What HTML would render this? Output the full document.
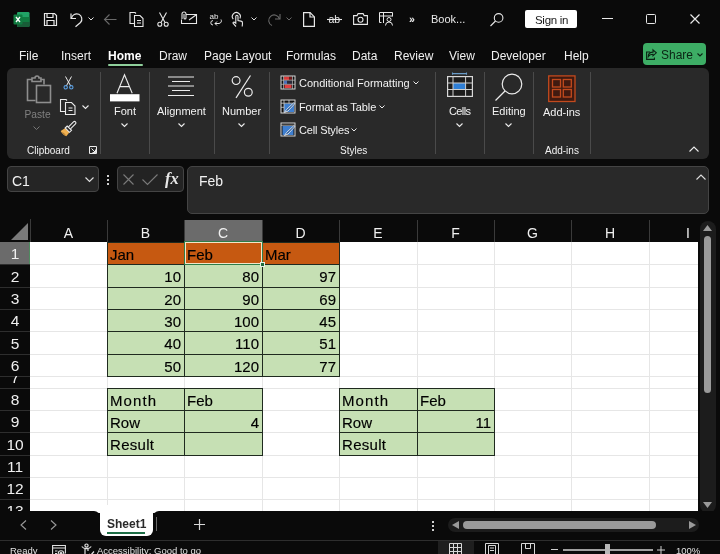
<!DOCTYPE html>
<html><head><meta charset="utf-8">
<style>
*{margin:0;padding:0;box-sizing:border-box}
html,body{width:720px;height:554px;overflow:hidden;background:#0a0a0a;font-family:"Liberation Sans",sans-serif;color:#fff}
.a{position:absolute}
.t{position:absolute;white-space:nowrap;line-height:1}
svg{position:absolute;overflow:visible}
/* title */
#ribbon{left:7px;top:68px;width:702px;height:91px;background:#292929;border-radius:6px}
.div{position:absolute;width:1px;background:#4a4a4a;top:72px;height:82px}
.tab{position:absolute;top:49px;font-size:12px;color:#f0f0f0}
.rl{font-size:11px;color:#f2f2f2}
/* grid */
#grid{left:30px;top:242px;width:668px;height:268px;background:#fff;overflow:hidden}
.gv{position:absolute;top:0;width:1px;height:268px;background:#e1e1e1}
.gh{position:absolute;left:0;height:1px;width:668px;background:#e1e1e1}
.ch{position:absolute;top:220px;height:22px;font-size:13px;color:#f0f0f0;text-align:center;line-height:22px}
.rh{position:absolute;left:0;width:30px;font-size:14px;color:#f0f0f0;text-align:center}
.cell{position:absolute;font-size:15px;color:#000;line-height:22px;padding:0 3px;-webkit-text-stroke:0.15px #000}
</style></head><body><div id="root" style="position:absolute;left:0;top:0;width:720px;height:554px;will-change:transform">

<!-- title bar -->
<div class="a" style="left:0;top:0;width:720px;height:38px;background:#0a0a0a"></div>

<!-- excel logo -->
<svg style="left:13px;top:12px" width="17" height="15" viewBox="0 0 17 15">
<rect x="4" y="0" width="12.5" height="15" rx="1.2" fill="#21a366"/>
<rect x="4" y="5" width="12.5" height="5" fill="#107c41"/>
<path d="M4 10h12.5v3.8a1.2 1.2 0 0 1-1.2 1.2h-10.1a1.2 1.2 0 0 1-1.2-1.2z" fill="#185c37"/>
<rect x="0.5" y="2.5" width="9" height="10" rx="1" fill="#107c41"/>
<path d="M3 5l4 5M7 5l-4 5" stroke="#fff" stroke-width="1.3"/>
</svg>
<!-- save -->
<svg style="left:43px;top:12px" width="15" height="15" viewBox="0 0 15 15" fill="none" stroke="#e8e8e8" stroke-width="1.2">
<path d="M1.5 1.5h10l2 2v10h-12z"/><path d="M4 1.5v4h6v-4"/><path d="M4 13.5v-5h7v5"/>
</svg>
<!-- undo -->
<svg style="left:70px;top:12px" width="14" height="15" viewBox="0 0 14 15" fill="none" stroke="#e8e8e8" stroke-width="1.2">
<path d="M1 1.5v5h5"/><path d="M1.5 6.2A5.2 5.2 0 1 1 10.5 10.5L5.5 14.8"/>
</svg>
<svg style="left:88px;top:17px" width="6" height="4" viewBox="0 0 6 4" fill="none" stroke="#e0e0e0" stroke-width="1"><path d="M0.5 0.5l2.5 2.5l2.5-2.5"/></svg>
<!-- back arrow grey -->
<svg style="left:104px;top:14px" width="13" height="11" viewBox="0 0 13 11" fill="none" stroke="#6a6a6a" stroke-width="1.1"><path d="M12.5 5.5h-12M5.5 0.5l-5 5l5 5"/></svg>
<!-- copy -->
<svg style="left:129px;top:12px" width="15" height="15" viewBox="0 0 15 15" fill="none" stroke="#e8e8e8" stroke-width="1.1">
<path d="M5.5 11.5h-4.5v-11h5l1 1"/><path d="M5.5 3.5h5.5l3 3v8h-8.5z"/><path d="M8 8.5h4M8 11h4"/>
</svg>
<!-- scissors -->
<svg style="left:157px;top:12px" width="12" height="15" viewBox="0 0 12 15" fill="none" stroke="#e8e8e8" stroke-width="1.1">
<path d="M2.5 0.5l5.5 10M9.5 0.5l-5.5 10"/><circle cx="2.8" cy="12.3" r="2"/><circle cx="9.2" cy="12.3" r="2"/>
</svg>
<!-- email -->
<svg style="left:181px;top:12px" width="16" height="12" viewBox="0 0 16 12" fill="none" stroke="#e8e8e8" stroke-width="1.1">
<path d="M5 2.5h10.5v9h-15v-4"/><path d="M8 8l7-5"/><path d="M1 7v-5a2 2 0 0 1 4 0v4a1 1 0 0 1-2 0v-4"/>
</svg>
<!-- ab spell -->
<svg style="left:209px;top:13px" width="14" height="14" viewBox="0 0 14 14">
<text x="0.5" y="6" font-size="8" font-family="Liberation Sans" fill="#e8e8e8">ab</text>
<path d="M4 7.6a2 2 0 1 0 0 4.4" fill="none" stroke="#e8e8e8" stroke-width="1"/>
<path d="M12 6.5c.8 1.5 .5 3.5-2 4h-4M8 8.5l-2 2l2 2" fill="none" stroke="#e8e8e8" stroke-width="1"/>
</svg>
<!-- touch -->
<svg style="left:231px;top:12px" width="13" height="15" viewBox="0 0 13 15" fill="none" stroke="#e8e8e8" stroke-width="1.1">
<path d="M2.3 7.2a4 4 0 1 1 6.6-.8"/><path d="M5 14.5l-2.8-3c-.7-.8.3-1.8 1.2-1.2l1.4 1v-7a1.1 1.1 0 0 1 2.2 0v4.2l3 .6c1 .2 1.6 1 1.5 2l-.3 3.4"/>
</svg>
<svg style="left:251px;top:17px" width="6" height="4" viewBox="0 0 6 4" fill="none" stroke="#e0e0e0" stroke-width="1"><path d="M0.5 0.5l2.5 2.5l2.5-2.5"/></svg>
<!-- redo grey -->
<svg style="left:267px;top:13px" width="14" height="13" viewBox="0 0 14 13" fill="none" stroke="#6a6a6a" stroke-width="1.1">
<path d="M13 1v5h-5"/><path d="M12.5 6A5.5 5.5 0 1 0 5 12.5"/>
</svg>
<svg style="left:286px;top:17px" width="6" height="4" viewBox="0 0 6 4" fill="none" stroke="#6a6a6a" stroke-width="1"><path d="M0.5 0.5l2.5 2.5l2.5-2.5"/></svg>
<!-- new doc -->
<svg style="left:303px;top:12px" width="12" height="15" viewBox="0 0 12 15" fill="none" stroke="#e8e8e8" stroke-width="1.2">
<path d="M0.6 0.6h6.5l4.3 4.3v9.5h-10.8z"/><path d="M7 0.6v4.4h4.4"/>
</svg>
<!-- strike ab -->
<svg style="left:327px;top:14px" width="15" height="10" viewBox="0 0 15 10">
<text x="1.5" y="9" font-size="10.5" font-family="Liberation Sans" fill="#e8e8e8">ab</text>
<path d="M0 5.5h15" stroke="#e8e8e8" stroke-width="1.1"/>
</svg>
<!-- camera -->
<svg style="left:353px;top:13px" width="15" height="12" viewBox="0 0 15 12" fill="none" stroke="#e8e8e8" stroke-width="1.1">
<path d="M0.6 2.6h3.5l1-2h5l1 2h3.3v8.8h-13.8z"/><circle cx="7.5" cy="6.8" r="2.5"/>
</svg>
<!-- form -->
<svg style="left:379px;top:12px" width="15" height="14" viewBox="0 0 15 14" fill="none" stroke="#e8e8e8" stroke-width="1">
<path d="M2.5 10.5h-2v-10h13v4"/><path d="M0.5 4h13M4.5 1v10"/><circle cx="10" cy="7.5" r="2"/><path d="M6.5 13.5a3.5 3.5 0 0 1 7 0"/>
</svg>
<div class="t" style="left:409px;top:14px;font-size:11px;color:#e8e8e8;letter-spacing:-1.5px;font-weight:bold">&#8250;&#8250;</div>
<div class="t" style="left:431px;top:14px;font-size:11px;color:#e8e8e8">Book...</div>
<!-- search -->
<svg style="left:490px;top:13px" width="14" height="14" viewBox="0 0 14 14" fill="none" stroke="#e8e8e8" stroke-width="1.1">
<circle cx="8.6" cy="4.9" r="4.3"/><path d="M5.5 8l-5 5"/>
</svg>
<div class="a" style="left:525px;top:10px;width:52px;height:18px;background:#fff;border-radius:2px"></div>
<div class="t" style="left:535px;top:14.5px;font-size:11.5px;color:#1a1a1a;letter-spacing:-0.3px">Sign in</div>
<div class="a" style="left:602px;top:18px;width:11px;height:1.2px;background:#e8e8e8"></div>
<div class="a" style="left:646px;top:14px;width:10px;height:10px;border:1.2px solid #e8e8e8;border-radius:1.5px"></div>
<svg style="left:690px;top:14px" width="10" height="10" viewBox="0 0 10 10" fill="none" stroke="#e8e8e8" stroke-width="1.2"><path d="M0.5 0.5l9 9M9.5 0.5l-9 9"/></svg>

<!-- tabs -->
<div class="tab" style="left:19px">File</div>
<div class="tab" style="left:61px">Insert</div>
<div class="tab" style="left:108px;font-weight:bold;color:#fff">Home</div>
<div class="a" style="left:108px;top:64px;width:35px;height:2px;background:#8fcf9b;border-radius:1px"></div>
<div class="tab" style="left:159px">Draw</div>
<div class="tab" style="left:204px">Page Layout</div>
<div class="tab" style="left:286px">Formulas</div>
<div class="tab" style="left:352px">Data</div>
<div class="tab" style="left:394px">Review</div>
<div class="tab" style="left:449px">View</div>
<div class="tab" style="left:491px">Developer</div>
<div class="tab" style="left:564px">Help</div>
<!-- share -->
<div class="a" style="left:643px;top:43px;width:63px;height:22px;background:#3dad65;border-radius:4px"></div>
<svg style="left:646px;top:49px" width="11" height="11" viewBox="0 0 11 11" fill="none" stroke="#0b2414" stroke-width="1.1"><path d="M7 .8l3.3 3l-3.3 3v-1.6c-2.3 0-3.8.8-4.8 2.5 0-2.5 1.6-4.6 4.8-4.6z"/><path d="M4 3h-3.4v7.4h7.8v-1.8"/></svg>
<div class="t" style="left:661px;top:49px;font-size:12px;color:#0b2414">Share</div>
<svg style="left:697px;top:53px" width="6" height="4" viewBox="0 0 6 4" fill="none" stroke="#0b2414" stroke-width="1.1"><path d="M0.5 0.5l2.5 2.5l2.5-2.5"/></svg>


<!-- ribbon -->
<div id="ribbon" class="a"></div>
<div class="div" style="left:100px"></div>
<div class="div" style="left:149px"></div>
<div class="div" style="left:214px"></div>
<div class="div" style="left:269px"></div>
<div class="div" style="left:435px"></div>
<div class="div" style="left:484px"></div>
<div class="div" style="left:533px"></div>
<div class="div" style="left:590px"></div>

<!-- paste -->
<svg style="left:26px;top:76px" width="26" height="28" viewBox="0 0 26 28" fill="none" stroke="#8e8e8e" stroke-width="1.6">
<path d="M6 3.5h-4.5v21h8"/><path d="M14.5 3.5h3.5v5"/><path d="M6 2h3a2 2 0 0 1 4 0h2v3.5h-9z"/><rect x="10.5" y="9.5" width="14" height="17"/>
</svg>
<div class="t rl" style="left:24.5px;top:109.5px;color:#808080;font-size:10.2px">Paste</div>
<svg style="left:33px;top:125.5px" width="7" height="4" viewBox="0 0 7 4" fill="none" stroke="#777" stroke-width="1"><path d="M0.5 0.5l3 3l3-3"/></svg>
<!-- cut -->
<svg style="left:63px;top:76px" width="11" height="13" viewBox="0 0 11 13" fill="none" stroke="#ececec" stroke-width="1">
<path d="M2.5 0.5l5.2 9.5M8.5 0.5l-5.2 9.5"/></svg>
<svg style="left:63px;top:76px" width="11" height="14" viewBox="0 0 11 14" fill="none" stroke="#5a9ee0" stroke-width="1.1">
<circle cx="2.7" cy="11.3" r="1.7"/><circle cx="8.3" cy="11.3" r="1.7"/></svg>
<!-- copy -->
<svg style="left:60px;top:99px" width="16" height="16" viewBox="0 0 16 16" fill="none" stroke="#ececec" stroke-width="1.1">
<path d="M5.5 12.5h-5v-12h5.5l1 1"/><path d="M5.5 3.5h6l3.5 3.5v8.5h-9.5z"/><path d="M8.5 9h4M8.5 11.5h4"/>
</svg>
<svg style="left:82px;top:105px" width="7" height="4" viewBox="0 0 7 4" fill="none" stroke="#ececec" stroke-width="1.1"><path d="M0.5 0.5l3 3l3-3"/></svg>
<!-- brush -->
<svg style="left:60px;top:121px" width="17" height="16" viewBox="0 0 17 16">
<path d="M5 7.2l4.3 4.3l-3 3.8c-2.2-.8-4.5-2.8-5.6-5.2z" fill="#f0b050"/>
<path d="M2.5 11.5l3 2.5" stroke="#a06a20" stroke-width="0.8"/>
<path d="M5.2 7l2-2l4.3 4.3l-2 2z" fill="none" stroke="#ececec" stroke-width="1.1"/>
<path d="M8.5 5.8l5-5a1.4 1.4 0 0 1 2 2l-5 5" fill="none" stroke="#ececec" stroke-width="1.1"/>
</svg>
<div class="t rl" style="left:27px;top:146px;font-size:10px">Clipboard</div>
<svg style="left:89px;top:146px" width="8" height="8" viewBox="0 0 8 8" fill="none" stroke="#ececec" stroke-width="1"><path d="M0.5 7.5v-7h7v7z M2.5 2.5l4 4M6.5 3.5v3h-3"/></svg>

<!-- font -->
<svg style="left:110px;top:74px" width="30" height="28" viewBox="0 0 30 28">
<path d="M7 19.3l7.5-18.6l7.7 18.6M9.8 12.6h9.5" fill="none" stroke="#ececec" stroke-width="1.1"/>
<rect x="0" y="20.2" width="29.5" height="7.2" fill="#fff"/>
</svg>
<div class="t rl" style="left:114px;top:106px">Font</div>
<svg style="left:121px;top:123px" width="7" height="4" viewBox="0 0 7 4" fill="none" stroke="#ececec" stroke-width="1.1"><path d="M0.5 0.5l3 3l3-3"/></svg>

<!-- alignment -->
<svg style="left:168px;top:76px" width="27" height="21" viewBox="0 0 27 21" stroke="#ececec" stroke-width="1.1">
<path d="M0 1h26M4 5.5h18M0 10h26M4 14.5h18M0 19.5h26"/>
</svg>
<div class="t rl" style="left:157px;top:106px">Alignment</div>
<svg style="left:178px;top:123px" width="7" height="4" viewBox="0 0 7 4" fill="none" stroke="#ececec" stroke-width="1.1"><path d="M0.5 0.5l3 3l3-3"/></svg>

<!-- number -->
<svg style="left:231px;top:75px" width="23" height="23" viewBox="0 0 23 23" fill="none" stroke="#ececec" stroke-width="1.2">
<circle cx="5.1" cy="5.6" r="3.9"/><circle cx="17.3" cy="17.2" r="3.9"/><path d="M19.5 0.5l-14.5 22.3"/>
</svg>
<div class="t rl" style="left:222px;top:106px">Number</div>
<svg style="left:238px;top:123px" width="7" height="4" viewBox="0 0 7 4" fill="none" stroke="#ececec" stroke-width="1.1"><path d="M0.5 0.5l3 3l3-3"/></svg>

<!-- styles -->
<svg style="left:280px;top:75px" width="16" height="15" viewBox="0 0 16 15">
<rect x="1" y="1" width="14" height="13" fill="#111"/>
<rect x="4" y="1.5" width="5" height="3.5" fill="#d83a3a"/><rect x="9" y="1.5" width="3" height="3.5" fill="#6a1a1a"/>
<rect x="4" y="5.5" width="3" height="3.5" fill="#4a6fb8"/><rect x="7" y="5.5" width="5" height="3.5" fill="#2a2a3a"/>
<rect x="4.5" y="9.5" width="7" height="3.5" fill="#e04040"/>
<rect x="1" y="1" width="14" height="13" fill="none" stroke="#d8d8d8" stroke-width="1"/>
<path d="M3.5 1v13M12.5 1v13M1 5.2h14M1 9.3h14" stroke="#bdbdbd" stroke-width="0.7"/>
</svg>
<div class="t rl" style="left:299px;top:78px">Conditional Formatting</div>
<svg style="left:413px;top:81px" width="6" height="4" viewBox="0 0 6 4" fill="none" stroke="#ececec" stroke-width="1"><path d="M0.5 0.5l2.5 2.5l2.5-2.5"/></svg>
<svg style="left:280px;top:99px" width="16" height="15" viewBox="0 0 16 15">
<rect x="1" y="1" width="14" height="13" fill="#111"/>
<path d="M4 4.5h10v8.5h-10z" fill="#3f7fcf"/>
<rect x="1" y="1" width="14" height="13" fill="none" stroke="#d8d8d8" stroke-width="1"/>
<path d="M1 4.2h14M1 8.3h3M4 1v13M9 1v3.5" stroke="#cfcfcf" stroke-width="0.8"/>
<path d="M4.5 13.5l2-3l7-6.5c.8-.5 1.5.2 1 1l-6.5 7l-3.5 1.5z" fill="#2d5fa0" stroke="#e8e8e8" stroke-width="0.9"/>
</svg>
<div class="t rl" style="left:299px;top:102px;letter-spacing:-0.1px">Format as Table</div>
<svg style="left:379px;top:105px" width="6" height="4" viewBox="0 0 6 4" fill="none" stroke="#ececec" stroke-width="1"><path d="M0.5 0.5l2.5 2.5l2.5-2.5"/></svg>
<svg style="left:280px;top:122px" width="16" height="15" viewBox="0 0 16 15">
<rect x="1" y="1" width="14" height="13" fill="#111"/>
<path d="M2.5 4h11v9h-11z" fill="#3f7fcf"/>
<rect x="1" y="1" width="14" height="13" fill="none" stroke="#d8d8d8" stroke-width="1"/>
<path d="M1 3.2h14" stroke="#cfcfcf" stroke-width="0.8"/>
<path d="M4.5 13.5l2-3l7-6.5c.8-.5 1.5.2 1 1l-6.5 7l-3.5 1.5z" fill="#2d5fa0" stroke="#e8e8e8" stroke-width="0.9"/>
</svg>
<div class="t rl" style="left:299px;top:125px;letter-spacing:-0.15px">Cell Styles</div>
<svg style="left:351px;top:128px" width="6" height="4" viewBox="0 0 6 4" fill="none" stroke="#ececec" stroke-width="1"><path d="M0.5 0.5l2.5 2.5l2.5-2.5"/></svg>
<div class="t rl" style="left:340px;top:146px;font-size:10px">Styles</div>

<!-- cells -->
<svg style="left:447px;top:72px" width="26" height="25" viewBox="0 0 26 25">
<path d="M5.5 1.6h14M5.5 0.5v2.2M19.5 0.5v2.2" stroke="#6a9cc8" stroke-width="1.1"/>
<rect x="0.6" y="4.6" width="24.8" height="19.8" fill="#1c1c1c" stroke="#d8d8d8" stroke-width="1.2"/>
<rect x="6" y="11" width="12.6" height="6.5" fill="#2f7fd6"/>
<path d="M0.6 11h24.8M0.6 17.5h24.8M6 4.6v19.8M18.6 4.6v19.8" stroke="#cfcfcf" stroke-width="1"/>
</svg>
<div class="t rl" style="left:449px;top:106px;letter-spacing:-0.6px">Cells</div>
<svg style="left:456px;top:123px" width="7" height="4" viewBox="0 0 7 4" fill="none" stroke="#ececec" stroke-width="1.1"><path d="M0.5 0.5l3 3l3-3"/></svg>

<!-- editing -->
<svg style="left:495px;top:73px" width="28" height="28" viewBox="0 0 28 28" fill="none" stroke="#ececec" stroke-width="1.2">
<circle cx="17" cy="11" r="9.8"/><path d="M10 18l-9.5 9.5"/>
</svg>
<div class="t rl" style="left:492px;top:106px">Editing</div>
<svg style="left:505px;top:123px" width="7" height="4" viewBox="0 0 7 4" fill="none" stroke="#ececec" stroke-width="1.1"><path d="M0.5 0.5l3 3l3-3"/></svg>

<!-- add-ins -->
<svg style="left:548px;top:75px" width="28" height="27" viewBox="0 0 28 27" fill="none" stroke="#c24a1e" stroke-width="1.3">
<rect x="0.7" y="0.9" width="26.3" height="25.6" fill="#401a10"/><rect x="4.5" y="4.5" width="8" height="7.5"/><rect x="15.3" y="4.5" width="8" height="7.5"/><rect x="4.5" y="14.5" width="8" height="7.5"/><rect x="15.3" y="14.5" width="8" height="7.5"/>
</svg>
<div class="t rl" style="left:543px;top:107px">Add-ins</div>
<div class="t rl" style="left:545px;top:146px;font-size:10px">Add-ins</div>
<svg style="left:689px;top:146px" width="10" height="6" viewBox="0 0 10 6" fill="none" stroke="#ececec" stroke-width="1.1"><path d="M0.5 5.5l4.5-4.5l4.5 4.5"/></svg>


<!-- formula bar -->
<div class="a" style="left:7px;top:166px;width:92px;height:26px;background:#252525;border:1px solid #444;border-radius:4px"></div>
<div class="t" style="left:12px;top:174px;font-size:14px;color:#f2f2f2">C1</div>
<svg style="left:85px;top:177px" width="9" height="6" viewBox="0 0 9 6" fill="none" stroke="#e0e0e0" stroke-width="1.1"><path d="M0.5 0.5l4 4l4-4"/></svg>
<div class="a" style="left:107px;top:175px;width:2px;height:2px;background:#d0d0d0"></div>
<div class="a" style="left:107px;top:179px;width:2px;height:2px;background:#d0d0d0"></div>
<div class="a" style="left:107px;top:183px;width:2px;height:2px;background:#d0d0d0"></div>
<div class="a" style="left:117px;top:166px;width:67px;height:26px;background:#232323;border:1px solid #444;border-radius:4px"></div>
<svg style="left:123px;top:174px" width="11" height="11" viewBox="0 0 11 11" fill="none" stroke="#7a7a7a" stroke-width="1.1"><path d="M0.5 0.5l10 10M10.5 0.5l-10 10"/></svg>
<svg style="left:142px;top:174px" width="16" height="11" viewBox="0 0 16 11" fill="none" stroke="#7a7a7a" stroke-width="1.1"><path d="M0.5 5.5l5 5l10-10"/></svg>
<div class="t" style="left:165px;top:171px;font-size:16.5px;color:#e8e8e8;font-family:'Liberation Serif',serif;font-style:italic;font-weight:bold">fx</div>
<div class="a" style="left:187px;top:166px;width:522px;height:48px;background:#292929;border:1px solid #444;border-radius:5px"></div>
<div class="t" style="left:199px;top:174px;font-size:14px;color:#f2f2f2">Feb</div>
<svg style="left:696px;top:174px" width="10" height="6" viewBox="0 0 10 6" fill="none" stroke="#e0e0e0" stroke-width="1.1"><path d="M0.5 5.5l4.5-4.5l4.5 4.5"/></svg>

<!-- grid -->
<div class="a" style="left:0;top:219px;width:698px;height:23px;background:#0a0a0a"></div>
<svg style="left:11px;top:223px" width="17" height="17" viewBox="0 0 17 17"><path d="M17 0v17h-17z" fill="#7a7a7a"/></svg>
<div class="a" style="left:30px;top:220px;width:77px;height:22px;background:#0a0a0a"></div>
<div class="t" style="left:30px;top:225.5px;width:77px;text-align:center;font-size:14px;color:#f0f0f0">A</div>
<div class="a" style="left:107px;top:220px;width:77px;height:22px;background:#0a0a0a"></div>
<div class="a" style="left:107px;top:220px;width:1px;height:22px;background:#3a3a3a"></div>
<div class="t" style="left:107px;top:225.5px;width:77px;text-align:center;font-size:14px;color:#f0f0f0">B</div>
<div class="a" style="left:184px;top:220px;width:78px;height:22px;background:#6b6b6b"></div>
<div class="a" style="left:184px;top:220px;width:1px;height:22px;background:#3a3a3a"></div>
<div class="t" style="left:184px;top:225.5px;width:78px;text-align:center;font-size:14px;color:#f0f0f0">C</div>
<div class="a" style="left:262px;top:220px;width:77px;height:22px;background:#0a0a0a"></div>
<div class="a" style="left:262px;top:220px;width:1px;height:22px;background:#3a3a3a"></div>
<div class="t" style="left:262px;top:225.5px;width:77px;text-align:center;font-size:14px;color:#f0f0f0">D</div>
<div class="a" style="left:339px;top:220px;width:78px;height:22px;background:#0a0a0a"></div>
<div class="a" style="left:339px;top:220px;width:1px;height:22px;background:#3a3a3a"></div>
<div class="t" style="left:339px;top:225.5px;width:78px;text-align:center;font-size:14px;color:#f0f0f0">E</div>
<div class="a" style="left:417px;top:220px;width:77px;height:22px;background:#0a0a0a"></div>
<div class="a" style="left:417px;top:220px;width:1px;height:22px;background:#3a3a3a"></div>
<div class="t" style="left:417px;top:225.5px;width:77px;text-align:center;font-size:14px;color:#f0f0f0">F</div>
<div class="a" style="left:494px;top:220px;width:77px;height:22px;background:#0a0a0a"></div>
<div class="a" style="left:494px;top:220px;width:1px;height:22px;background:#3a3a3a"></div>
<div class="t" style="left:494px;top:225.5px;width:77px;text-align:center;font-size:14px;color:#f0f0f0">G</div>
<div class="a" style="left:571px;top:220px;width:78px;height:22px;background:#0a0a0a"></div>
<div class="a" style="left:571px;top:220px;width:1px;height:22px;background:#3a3a3a"></div>
<div class="t" style="left:571px;top:225.5px;width:78px;text-align:center;font-size:14px;color:#f0f0f0">H</div>
<div class="a" style="left:649px;top:220px;width:49px;height:22px;background:#0a0a0a"></div>
<div class="a" style="left:649px;top:220px;width:1px;height:22px;background:#3a3a3a"></div>
<div class="t" style="left:649px;top:225.5px;width:78px;text-align:center;font-size:14px;color:#f0f0f0">I</div>
<div class="a" style="left:30px;top:219px;width:1px;height:23px;background:#3a3a3a"></div>
<div class="a" style="left:30px;top:242px;width:668px;height:269px;background:#fff"></div>
<div class="a" style="left:107px;top:242px;width:1px;height:269px;background:#e6e6e6"></div>
<div class="a" style="left:184px;top:242px;width:1px;height:269px;background:#e6e6e6"></div>
<div class="a" style="left:262px;top:242px;width:1px;height:269px;background:#e6e6e6"></div>
<div class="a" style="left:339px;top:242px;width:1px;height:269px;background:#e6e6e6"></div>
<div class="a" style="left:417px;top:242px;width:1px;height:269px;background:#e6e6e6"></div>
<div class="a" style="left:494px;top:242px;width:1px;height:269px;background:#e6e6e6"></div>
<div class="a" style="left:571px;top:242px;width:1px;height:269px;background:#e6e6e6"></div>
<div class="a" style="left:649px;top:242px;width:1px;height:269px;background:#e6e6e6"></div>
<div class="a" style="left:30px;top:264px;width:668px;height:1px;background:#e6e6e6"></div>
<div class="a" style="left:30px;top:287px;width:668px;height:1px;background:#e6e6e6"></div>
<div class="a" style="left:30px;top:309px;width:668px;height:1px;background:#e6e6e6"></div>
<div class="a" style="left:30px;top:331px;width:668px;height:1px;background:#e6e6e6"></div>
<div class="a" style="left:30px;top:354px;width:668px;height:1px;background:#e6e6e6"></div>
<div class="a" style="left:30px;top:376px;width:668px;height:1px;background:#e6e6e6"></div>
<div class="a" style="left:30px;top:388px;width:668px;height:1px;background:#e6e6e6"></div>
<div class="a" style="left:30px;top:410px;width:668px;height:1px;background:#e6e6e6"></div>
<div class="a" style="left:30px;top:432px;width:668px;height:1px;background:#e6e6e6"></div>
<div class="a" style="left:30px;top:455px;width:668px;height:1px;background:#e6e6e6"></div>
<div class="a" style="left:30px;top:477px;width:668px;height:1px;background:#e6e6e6"></div>
<div class="a" style="left:30px;top:499px;width:668px;height:1px;background:#e6e6e6"></div>
<div class="a" style="left:0;top:242px;width:30px;height:269px;background:#0a0a0a"></div>
<div class="a" style="left:0;top:242px;width:30px;height:22px;background:#6b6b6b"></div>
<div class="a" style="left:29px;top:242px;width:1px;height:22px;background:#4f8a5f"></div>
<div class="a" style="left:0;top:264px;width:30px;height:1px;background:#2e2e2e"></div>
<div class="a" style="left:0;top:242px;width:30px;height:22px;overflow:hidden"><div class="t" style="left:0;top:4px;width:30px;text-align:center;font-size:15.5px;color:#f0f0f0">1</div></div>
<div class="a" style="left:0;top:287px;width:30px;height:1px;background:#2e2e2e"></div>
<div class="a" style="left:0;top:264px;width:30px;height:23px;overflow:hidden"><div class="t" style="left:0;top:5px;width:30px;text-align:center;font-size:15.5px;color:#f0f0f0">2</div></div>
<div class="a" style="left:0;top:309px;width:30px;height:1px;background:#2e2e2e"></div>
<div class="a" style="left:0;top:287px;width:30px;height:22px;overflow:hidden"><div class="t" style="left:0;top:4px;width:30px;text-align:center;font-size:15.5px;color:#f0f0f0">3</div></div>
<div class="a" style="left:0;top:331px;width:30px;height:1px;background:#2e2e2e"></div>
<div class="a" style="left:0;top:309px;width:30px;height:22px;overflow:hidden"><div class="t" style="left:0;top:4px;width:30px;text-align:center;font-size:15.5px;color:#f0f0f0">4</div></div>
<div class="a" style="left:0;top:354px;width:30px;height:1px;background:#2e2e2e"></div>
<div class="a" style="left:0;top:331px;width:30px;height:23px;overflow:hidden"><div class="t" style="left:0;top:5px;width:30px;text-align:center;font-size:15.5px;color:#f0f0f0">5</div></div>
<div class="a" style="left:0;top:376px;width:30px;height:1px;background:#2e2e2e"></div>
<div class="a" style="left:0;top:354px;width:30px;height:22px;overflow:hidden"><div class="t" style="left:0;top:4px;width:30px;text-align:center;font-size:15.5px;color:#f0f0f0">6</div></div>
<div class="a" style="left:0;top:388px;width:30px;height:1px;background:#2e2e2e"></div>
<div class="a" style="left:0;top:376px;width:30px;height:12px;overflow:hidden"><div class="t" style="left:0;top:-6px;width:30px;text-align:center;font-size:15.5px;color:#f0f0f0">7</div></div>
<div class="a" style="left:0;top:410px;width:30px;height:1px;background:#2e2e2e"></div>
<div class="a" style="left:0;top:388px;width:30px;height:22px;overflow:hidden"><div class="t" style="left:0;top:4px;width:30px;text-align:center;font-size:15.5px;color:#f0f0f0">8</div></div>
<div class="a" style="left:0;top:432px;width:30px;height:1px;background:#2e2e2e"></div>
<div class="a" style="left:0;top:410px;width:30px;height:22px;overflow:hidden"><div class="t" style="left:0;top:4px;width:30px;text-align:center;font-size:15.5px;color:#f0f0f0">9</div></div>
<div class="a" style="left:0;top:455px;width:30px;height:1px;background:#2e2e2e"></div>
<div class="a" style="left:0;top:432px;width:30px;height:23px;overflow:hidden"><div class="t" style="left:0;top:5px;width:30px;text-align:center;font-size:15.5px;color:#f0f0f0">10</div></div>
<div class="a" style="left:0;top:477px;width:30px;height:1px;background:#2e2e2e"></div>
<div class="a" style="left:0;top:455px;width:30px;height:22px;overflow:hidden"><div class="t" style="left:0;top:4px;width:30px;text-align:center;font-size:15.5px;color:#f0f0f0">11</div></div>
<div class="a" style="left:0;top:499px;width:30px;height:1px;background:#2e2e2e"></div>
<div class="a" style="left:0;top:477px;width:30px;height:22px;overflow:hidden"><div class="t" style="left:0;top:4px;width:30px;text-align:center;font-size:15.5px;color:#f0f0f0">12</div></div>
<div class="a" style="left:0;top:511px;width:30px;height:1px;background:#2e2e2e"></div>
<div class="a" style="left:0;top:499px;width:30px;height:12px;overflow:hidden"><div class="t" style="left:0;top:4px;width:30px;text-align:center;font-size:15.5px;color:#f0f0f0">13</div></div>
<div class="a" style="left:107px;top:242px;width:233px;height:135px;background:#c6e0b4"></div>
<div class="a" style="left:107px;top:242px;width:233px;height:23px;background:#c65911"></div>
<div class="a" style="left:107px;top:242px;width:1px;height:135px;background:#1f2a1f"></div>
<div class="a" style="left:184px;top:242px;width:1px;height:135px;background:#1f2a1f"></div>
<div class="a" style="left:262px;top:242px;width:1px;height:135px;background:#1f2a1f"></div>
<div class="a" style="left:339px;top:242px;width:1px;height:135px;background:#1f2a1f"></div>
<div class="a" style="left:107px;top:242px;width:233px;height:1px;background:#1f2a1f"></div>
<div class="a" style="left:107px;top:264px;width:233px;height:1px;background:#1f2a1f"></div>
<div class="a" style="left:107px;top:287px;width:233px;height:1px;background:#1f2a1f"></div>
<div class="a" style="left:107px;top:309px;width:233px;height:1px;background:#1f2a1f"></div>
<div class="a" style="left:107px;top:331px;width:233px;height:1px;background:#1f2a1f"></div>
<div class="a" style="left:107px;top:354px;width:233px;height:1px;background:#1f2a1f"></div>
<div class="a" style="left:107px;top:376px;width:233px;height:1px;background:#1f2a1f"></div>
<div class="a" style="left:107px;top:388px;width:156px;height:68px;background:#c6e0b4"></div>
<div class="a" style="left:107px;top:388px;width:1px;height:68px;background:#1f2a1f"></div>
<div class="a" style="left:184px;top:388px;width:1px;height:68px;background:#1f2a1f"></div>
<div class="a" style="left:262px;top:388px;width:1px;height:68px;background:#1f2a1f"></div>
<div class="a" style="left:107px;top:388px;width:156px;height:1px;background:#1f2a1f"></div>
<div class="a" style="left:107px;top:410px;width:156px;height:1px;background:#1f2a1f"></div>
<div class="a" style="left:107px;top:432px;width:156px;height:1px;background:#1f2a1f"></div>
<div class="a" style="left:107px;top:455px;width:156px;height:1px;background:#1f2a1f"></div>
<div class="a" style="left:339px;top:388px;width:156px;height:68px;background:#c6e0b4"></div>
<div class="a" style="left:339px;top:388px;width:1px;height:68px;background:#1f2a1f"></div>
<div class="a" style="left:417px;top:388px;width:1px;height:68px;background:#1f2a1f"></div>
<div class="a" style="left:494px;top:388px;width:1px;height:68px;background:#1f2a1f"></div>
<div class="a" style="left:339px;top:388px;width:156px;height:1px;background:#1f2a1f"></div>
<div class="a" style="left:339px;top:410px;width:156px;height:1px;background:#1f2a1f"></div>
<div class="a" style="left:339px;top:432px;width:156px;height:1px;background:#1f2a1f"></div>
<div class="a" style="left:339px;top:455px;width:156px;height:1px;background:#1f2a1f"></div>
<div class="t cell" style="left:107px;top:243.5px;letter-spacing:0px">Jan</div>
<div class="t cell" style="left:184px;top:243.5px;letter-spacing:0px">Feb</div>
<div class="t cell" style="left:262px;top:243.5px;letter-spacing:0px">Mar</div>
<div class="t cell" style="left:107px;top:265.5px;width:77px;text-align:right">10</div>
<div class="t cell" style="left:184px;top:265.5px;width:78px;text-align:right">80</div>
<div class="t cell" style="left:262px;top:265.5px;width:77px;text-align:right">97</div>
<div class="t cell" style="left:107px;top:288.5px;width:77px;text-align:right">20</div>
<div class="t cell" style="left:184px;top:288.5px;width:78px;text-align:right">90</div>
<div class="t cell" style="left:262px;top:288.5px;width:77px;text-align:right">69</div>
<div class="t cell" style="left:107px;top:310.5px;width:77px;text-align:right">30</div>
<div class="t cell" style="left:184px;top:310.5px;width:78px;text-align:right">100</div>
<div class="t cell" style="left:262px;top:310.5px;width:77px;text-align:right">45</div>
<div class="t cell" style="left:107px;top:332.5px;width:77px;text-align:right">40</div>
<div class="t cell" style="left:184px;top:332.5px;width:78px;text-align:right">110</div>
<div class="t cell" style="left:262px;top:332.5px;width:77px;text-align:right">51</div>
<div class="t cell" style="left:107px;top:355.5px;width:77px;text-align:right">50</div>
<div class="t cell" style="left:184px;top:355.5px;width:78px;text-align:right">120</div>
<div class="t cell" style="left:262px;top:355.5px;width:77px;text-align:right">77</div>
<div class="t cell" style="left:107px;top:389.5px;letter-spacing:1.1px">Month</div>
<div class="t cell" style="left:184px;top:389.5px;letter-spacing:0px">Feb</div>
<div class="t cell" style="left:107px;top:411.5px;letter-spacing:0px">Row</div>
<div class="t cell" style="left:184px;top:411.5px;width:78px;text-align:right">4</div>
<div class="t cell" style="left:107px;top:433.5px;letter-spacing:0.3px">Result</div>
<div class="t cell" style="left:339px;top:389.5px;letter-spacing:1.1px">Month</div>
<div class="t cell" style="left:417px;top:389.5px;letter-spacing:0px">Feb</div>
<div class="t cell" style="left:339px;top:411.5px;letter-spacing:0px">Row</div>
<div class="t cell" style="left:417px;top:411.5px;width:77px;text-align:right">11</div>
<div class="t cell" style="left:339px;top:433.5px;letter-spacing:0.3px">Result</div>
<div class="a" style="left:184px;top:241px;width:79px;height:24px;border:1px solid #2e7d4a"></div>
<div class="a" style="left:185px;top:242px;width:77px;height:22px;border:1px solid #f3e6c8"></div>
<div class="a" style="left:260px;top:262px;width:5px;height:5px;background:#1e6b3a;border:1px solid #e8f0e8"></div>
<!-- /grid -->

<!-- bottom -->
<div class="a" style="left:698px;top:219px;width:22px;height:292px;background:#0a0a0a"></div>
<div class="a" style="left:700px;top:221px;width:16px;height:292px;background:#1c1c1c;border-radius:8px"></div>
<svg style="left:703px;top:225px" width="9" height="6" viewBox="0 0 9 6"><path d="M4.5 0l4.5 6h-9z" fill="#9a9a9a"/></svg>
<div class="a" style="left:704px;top:236px;width:7px;height:157px;background:#9a9a9a;border-radius:4px"></div>
<svg style="left:703px;top:502px" width="9" height="6" viewBox="0 0 9 6"><path d="M4.5 6l4.5-6h-9z" fill="#9a9a9a"/></svg>

<div class="a" style="left:0;top:511px;width:720px;height:28px;background:#0a0a0a"></div>
<svg style="left:20px;top:520px" width="7" height="10" viewBox="0 0 7 10" fill="none" stroke="#9a9a9a" stroke-width="1.1"><path d="M6 0.5l-5 4.5l5 4.5"/></svg>
<svg style="left:50px;top:520px" width="7" height="10" viewBox="0 0 7 10" fill="none" stroke="#9a9a9a" stroke-width="1.1"><path d="M1 0.5l5 4.5l-5 4.5"/></svg>
<div class="a" style="left:100px;top:505px;width:53px;height:31px;background:#fff;border-radius:0 0 6px 6px"></div>
<div class="a" style="left:92px;top:505px;width:8px;height:8px;background:#fff"></div>
<div class="a" style="left:92px;top:505px;width:8px;height:8px;background:#0a0a0a;border-radius:0 6px 0 0;top:511px"></div>
<div class="a" style="left:153px;top:505px;width:8px;height:8px;background:#fff"></div>
<div class="a" style="left:153px;top:511px;width:8px;height:8px;background:#0a0a0a;border-radius:6px 0 0 0"></div>
<div class="t" style="left:107px;top:518px;font-size:12px;font-weight:bold;color:#2a2a2a">Sheet1</div>
<div class="a" style="left:107px;top:532px;width:38px;height:2px;background:#1e6e46"></div>
<div class="a" style="left:156px;top:517px;width:1px;height:14px;background:#6a6a6a"></div>
<svg style="left:194px;top:519px" width="11" height="11" viewBox="0 0 11 11" fill="none" stroke="#d8d8d8" stroke-width="1.2"><path d="M5.5 0v11M0 5.5h11"/></svg>

<div class="a" style="left:432px;top:521px;width:2px;height:2px;background:#d0d0d0"></div>
<div class="a" style="left:432px;top:525px;width:2px;height:2px;background:#d0d0d0"></div>
<div class="a" style="left:432px;top:529px;width:2px;height:2px;background:#d0d0d0"></div>
<div class="a" style="left:448px;top:518px;width:251px;height:14px;background:#1c1c1c;border-radius:7px"></div>
<svg style="left:452px;top:521px" width="7" height="8" viewBox="0 0 7 8"><path d="M0 4l7-4v8z" fill="#9a9a9a"/></svg>
<div class="a" style="left:463px;top:521px;width:193px;height:8px;background:#9a9a9a;border-radius:4px"></div>
<svg style="left:689px;top:521px" width="7" height="8" viewBox="0 0 7 8"><path d="M7 4l-7-4v8z" fill="#9a9a9a"/></svg>

<div class="a" style="left:0;top:540px;width:720px;height:1px;background:#2e2e2e"></div>
<div class="a" style="left:0;top:541px;width:720px;height:13px;background:#0a0a0a"></div>
<div class="t" style="left:10px;top:546px;font-size:9.5px;color:#e0e0e0">Ready</div>
<svg style="left:52px;top:545px" width="14" height="10" viewBox="0 0 14 10" fill="none" stroke="#e0e0e0" stroke-width="1.1"><path d="M0.6 9.5v-9h12.8v8M0.6 3h12.8M3 6h2.5M3 8.5h2"/><circle cx="9" cy="8.5" r="2.8"/><circle cx="9" cy="8.5" r="1" fill="#e0e0e0"/></svg>
<svg style="left:81px;top:543px" width="14" height="12" viewBox="0 0 14 12" fill="none" stroke="#e0e0e0" stroke-width="1.2"><circle cx="5.5" cy="2.6" r="1.6"/><path d="M0.8 3.5c1 1.5 2.5 2.2 4.7 2.2s3.7-.7 4.7-2.2M4 5.5v6.5M7 5.5v2.5M8 11l1.5 1.5l3.5-4"/></svg>
<div class="t" style="left:97px;top:546px;font-size:9.5px;color:#e0e0e0">Accessibility: Good to go</div>
<div class="a" style="left:438px;top:541px;width:36px;height:13px;background:#1f1f1f"></div>
<svg style="left:449px;top:543px" width="13" height="12" viewBox="0 0 13 12" fill="none" stroke="#d8d8d8" stroke-width="1"><path d="M0.5 0.5h12v12h-12zM0.5 4.5h12M0.5 8.5h12M4.5 0.5v12M8.5 0.5v12"/></svg>
<svg style="left:485px;top:543px" width="14" height="12" viewBox="0 0 14 12" fill="none" stroke="#d8d8d8" stroke-width="1"><path d="M0.5 0.5h13v12h-13zM3.5 2.5h7v10h-7zM5 5h4M5 7.5h4"/></svg>
<svg style="left:521px;top:543px" width="14" height="12" viewBox="0 0 14 12" fill="none" stroke="#d8d8d8" stroke-width="1"><path d="M0.5 12v-11.5h13v12M4.5 0.5v5h5v-5"/></svg>
<div class="a" style="left:551px;top:549px;width:7px;height:1px;background:#d0d0d0"></div>
<div class="a" style="left:563px;top:549px;width:90px;height:1.5px;background:#a0a0a0"></div>
<div class="a" style="left:605px;top:544px;width:5px;height:10px;background:#b8b8b8"></div>
<svg style="left:657px;top:546px" width="8" height="8" viewBox="0 0 8 8" fill="none" stroke="#d0d0d0" stroke-width="1"><path d="M4 0v8M0 4h8"/></svg>
<div class="t" style="left:676px;top:546px;font-size:9.5px;color:#e0e0e0">100%</div>
<!-- /bottom -->

</div></body></html>
